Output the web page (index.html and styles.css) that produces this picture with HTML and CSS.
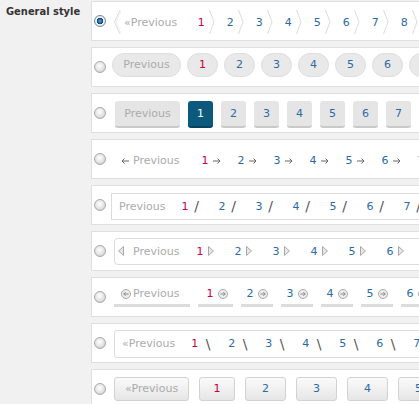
FILE: index.html
```html
<!DOCTYPE html>
<html lang="en">
<head>
    <meta charset="UTF-8">
    <meta name="viewport" content="width=device-width, initial-scale=1.0">
    <title>Pagination settings</title>
    <link rel="stylesheet" href="styles.css">
</head>
<body>

    <div class="form-row">
        <div class="field-label">General style</div>

        <div class="choices">

            <!-- 1: chevrons -->
            <label class="choice">
                <input type="radio" name="style" checked>
                <div class="nav nav-chevron">
                    <svg class="chev" width="8" height="24" viewBox="0 0 8 24"><polyline points="7,0 1.5,12 7,24" fill="none" stroke="#dcdcdc"/><polyline points="8,1 3,12 8,23" fill="none" stroke="#f0f0f0"/></svg>
                    <span class="prev">«Previous</span>
                    <span class="item"><span class="num current">1</span><svg class="chev" width="6" height="24" viewBox="0 0 6 24"><polyline points="0.5,0 5,12 0.5,24" fill="none" stroke="#dcdcdc"/></svg></span>
                    <span class="item"><span class="num">2</span><svg class="chev" width="6" height="24" viewBox="0 0 6 24"><polyline points="0.5,0 5,12 0.5,24" fill="none" stroke="#dcdcdc"/></svg></span>
                    <span class="item"><span class="num">3</span><svg class="chev" width="6" height="24" viewBox="0 0 6 24"><polyline points="0.5,0 5,12 0.5,24" fill="none" stroke="#dcdcdc"/></svg></span>
                    <span class="item"><span class="num">4</span><svg class="chev" width="6" height="24" viewBox="0 0 6 24"><polyline points="0.5,0 5,12 0.5,24" fill="none" stroke="#dcdcdc"/></svg></span>
                    <span class="item"><span class="num">5</span><svg class="chev" width="6" height="24" viewBox="0 0 6 24"><polyline points="0.5,0 5,12 0.5,24" fill="none" stroke="#dcdcdc"/></svg></span>
                    <span class="item"><span class="num">6</span><svg class="chev" width="6" height="24" viewBox="0 0 6 24"><polyline points="0.5,0 5,12 0.5,24" fill="none" stroke="#dcdcdc"/></svg></span>
                    <span class="item"><span class="num">7</span><svg class="chev" width="6" height="24" viewBox="0 0 6 24"><polyline points="0.5,0 5,12 0.5,24" fill="none" stroke="#dcdcdc"/></svg></span>
                    <span class="item"><span class="num">8</span><svg class="chev" width="6" height="24" viewBox="0 0 6 24"><polyline points="0.5,0 5,12 0.5,24" fill="none" stroke="#dcdcdc"/></svg></span>
                </div>
            </label>

            <!-- 2: pills -->
            <label class="choice">
                <input type="radio" name="style">
                <div class="nav nav-pill">
                    <span class="prev">Previous</span>
                    <span class="item current">1</span>
                    <span class="item">2</span>
                    <span class="item">3</span>
                    <span class="item">4</span>
                    <span class="item">5</span>
                    <span class="item">6</span>
                    <span class="item">7</span>
                </div>
            </label>

            <!-- 3: square buttons -->
            <label class="choice">
                <input type="radio" name="style">
                <div class="nav nav-square">
                    <span class="prev">Previous</span>
                    <span class="item current">1</span>
                    <span class="item">2</span>
                    <span class="item">3</span>
                    <span class="item">4</span>
                    <span class="item">5</span>
                    <span class="item">6</span>
                    <span class="item">7</span>
                </div>
            </label>

            <!-- 4: arrows -->
            <label class="choice">
                <input type="radio" name="style">
                <div class="nav nav-arrow">
                    <span class="prev"><svg width="8" height="6" viewBox="0 0 8 6"><path d="M8 3H1M3.5 0.5L1 3L3.5 5.5" fill="none" stroke="#666"/></svg>Previous</span>
                    <span class="item"><span class="num current">1</span><svg width="8" height="6" viewBox="0 0 8 6"><path d="M0 3H7M4.5 0.5L7 3L4.5 5.5" fill="none" stroke="#666"/></svg></span>
                    <span class="item"><span class="num">2</span><svg width="8" height="6" viewBox="0 0 8 6"><path d="M0 3H7M4.5 0.5L7 3L4.5 5.5" fill="none" stroke="#666"/></svg></span>
                    <span class="item"><span class="num">3</span><svg width="8" height="6" viewBox="0 0 8 6"><path d="M0 3H7M4.5 0.5L7 3L4.5 5.5" fill="none" stroke="#666"/></svg></span>
                    <span class="item"><span class="num">4</span><svg width="8" height="6" viewBox="0 0 8 6"><path d="M0 3H7M4.5 0.5L7 3L4.5 5.5" fill="none" stroke="#666"/></svg></span>
                    <span class="item"><span class="num">5</span><svg width="8" height="6" viewBox="0 0 8 6"><path d="M0 3H7M4.5 0.5L7 3L4.5 5.5" fill="none" stroke="#666"/></svg></span>
                    <span class="item"><span class="num">6</span><svg width="8" height="6" viewBox="0 0 8 6"><path d="M0 3H7M4.5 0.5L7 3L4.5 5.5" fill="none" stroke="#666"/></svg></span>
                    <span class="item"><span class="num">7</span><svg width="8" height="6" viewBox="0 0 8 6"><path d="M0 3H7M4.5 0.5L7 3L4.5 5.5" fill="none" stroke="#666"/></svg></span>
                </div>
            </label>

            <!-- 5: slashes -->
            <label class="choice">
                <input type="radio" name="style">
                <div class="nav nav-framed nav-slash">
                    <span class="prev">Previous</span>
                    <span class="item"><span class="num current">1</span><span class="sep">/</span></span>
                    <span class="item"><span class="num">2</span><span class="sep">/</span></span>
                    <span class="item"><span class="num">3</span><span class="sep">/</span></span>
                    <span class="item"><span class="num">4</span><span class="sep">/</span></span>
                    <span class="item"><span class="num">5</span><span class="sep">/</span></span>
                    <span class="item"><span class="num">6</span><span class="sep">/</span></span>
                    <span class="item"><span class="num">7</span><span class="sep">/</span></span>
                </div>
            </label>

            <!-- 6: triangles -->
            <label class="choice">
                <input type="radio" name="style">
                <div class="nav nav-framed nav-tri">
                    <svg class="tri-left" width="6" height="10" viewBox="0 0 6 10"><polygon points="5.5,0.5 0.5,5 5.5,9.5" fill="#e6e6e6" stroke="#aaa"/></svg>
                    <span class="prev">Previous</span>
                    <span class="item"><span class="num current">1</span><svg width="6" height="10" viewBox="0 0 6 10"><polygon points="0.5,0.5 5.5,5 0.5,9.5" fill="#e6e6e6" stroke="#aaa"/></svg></span>
                    <span class="item"><span class="num">2</span><svg width="6" height="10" viewBox="0 0 6 10"><polygon points="0.5,0.5 5.5,5 0.5,9.5" fill="#e6e6e6" stroke="#aaa"/></svg></span>
                    <span class="item"><span class="num">3</span><svg width="6" height="10" viewBox="0 0 6 10"><polygon points="0.5,0.5 5.5,5 0.5,9.5" fill="#e6e6e6" stroke="#aaa"/></svg></span>
                    <span class="item"><span class="num">4</span><svg width="6" height="10" viewBox="0 0 6 10"><polygon points="0.5,0.5 5.5,5 0.5,9.5" fill="#e6e6e6" stroke="#aaa"/></svg></span>
                    <span class="item"><span class="num">5</span><svg width="6" height="10" viewBox="0 0 6 10"><polygon points="0.5,0.5 5.5,5 0.5,9.5" fill="#e6e6e6" stroke="#aaa"/></svg></span>
                    <span class="item"><span class="num">6</span><svg width="6" height="10" viewBox="0 0 6 10"><polygon points="0.5,0.5 5.5,5 0.5,9.5" fill="#e6e6e6" stroke="#aaa"/></svg></span>
                </div>
            </label>

            <!-- 7: underlined with circle arrows -->
            <label class="choice">
                <input type="radio" name="style">
                <div class="nav nav-under">
                    <span class="prev"><svg width="10" height="10" viewBox="0 0 10 10"><circle cx="5" cy="5" r="4.5" fill="#ececec" stroke="#aaa"/><path d="M7.5 5H2.8M4.6 3.2L2.8 5L4.6 6.8" fill="none" stroke="#888"/></svg>Previous</span>
                    <span class="item first"><span class="num current">1</span><svg width="10" height="10" viewBox="0 0 10 10"><circle cx="5" cy="5" r="4.5" fill="#ececec" stroke="#aaa"/><path d="M2.5 5H7.2M5.4 3.2L7.2 5L5.4 6.8" fill="none" stroke="#888"/></svg></span>
                    <span class="item"><span class="num">2</span><svg width="10" height="10" viewBox="0 0 10 10"><circle cx="5" cy="5" r="4.5" fill="#ececec" stroke="#aaa"/><path d="M2.5 5H7.2M5.4 3.2L7.2 5L5.4 6.8" fill="none" stroke="#888"/></svg></span>
                    <span class="item"><span class="num">3</span><svg width="10" height="10" viewBox="0 0 10 10"><circle cx="5" cy="5" r="4.5" fill="#ececec" stroke="#aaa"/><path d="M2.5 5H7.2M5.4 3.2L7.2 5L5.4 6.8" fill="none" stroke="#888"/></svg></span>
                    <span class="item"><span class="num">4</span><svg width="10" height="10" viewBox="0 0 10 10"><circle cx="5" cy="5" r="4.5" fill="#ececec" stroke="#aaa"/><path d="M2.5 5H7.2M5.4 3.2L7.2 5L5.4 6.8" fill="none" stroke="#888"/></svg></span>
                    <span class="item"><span class="num">5</span><svg width="10" height="10" viewBox="0 0 10 10"><circle cx="5" cy="5" r="4.5" fill="#ececec" stroke="#aaa"/><path d="M2.5 5H7.2M5.4 3.2L7.2 5L5.4 6.8" fill="none" stroke="#888"/></svg></span>
                    <span class="item"><span class="num">6</span><svg width="10" height="10" viewBox="0 0 10 10"><circle cx="5" cy="5" r="4.5" fill="#ececec" stroke="#aaa"/><path d="M2.5 5H7.2M5.4 3.2L7.2 5L5.4 6.8" fill="none" stroke="#888"/></svg></span>
                </div>
            </label>

            <!-- 8: backslashes -->
            <label class="choice">
                <input type="radio" name="style">
                <div class="nav nav-framed nav-back">
                    <span class="prev">«Previous</span>
                    <span class="item"><span class="num current">1</span><span class="sep">\</span></span>
                    <span class="item"><span class="num">2</span><span class="sep">\</span></span>
                    <span class="item"><span class="num">3</span><span class="sep">\</span></span>
                    <span class="item"><span class="num">4</span><span class="sep">\</span></span>
                    <span class="item"><span class="num">5</span><span class="sep">\</span></span>
                    <span class="item"><span class="num">6</span><span class="sep">\</span></span>
                    <span class="item"><span class="num">7</span><span class="sep">\</span></span>
                </div>
            </label>

            <!-- 9: gradient buttons -->
            <label class="choice">
                <input type="radio" name="style">
                <div class="nav nav-button">
                    <span class="prev">«Previous</span>
                    <span class="item current">1</span>
                    <span class="item">2</span>
                    <span class="item">3</span>
                    <span class="item">4</span>
                    <span class="item">5</span>
                </div>
            </label>

        </div>
    </div>

</body>
</html>
```

FILE: styles.css
```css
* { box-sizing: border-box; }
body { margin: 0; background: #f1f1f1; font-family: "DejaVu Sans", Verdana, sans-serif; font-size: 11px; color: #333; overflow: hidden; }
.form-row { display: flex; width: 600px; }
.field-label { width: 91px; flex: none; padding: 5px 0 0 6px; font-family: "DejaVu Sans Condensed", "DejaVu Sans", sans-serif; font-weight: bold; font-size: 11px; color: #333; }
.choices { width: 500px; flex: none; padding-top: 1px; display: flex; flex-direction: column; gap: 6px; }
.choice { height: 40px; background: #fff; border: 1px solid #dfdfdf; border-right: none; display: flex; align-items: center; padding-left: 2px; white-space: nowrap; }

.choice input { appearance: none; -webkit-appearance: none; flex: none; width: 12px; height: 12px; margin: 0; border-radius: 50%; border: 1px solid #a9a9a9; background: radial-gradient(circle at 45% 40%, #fff 0, #e8e8e8 45%, #c4c4c4 100%); }
.choice input:checked { border-color: #7a8a99; background: radial-gradient(circle, #5fa8e0 0, #1d64a6 2px, #0c3f70 3px, #fff 3.6px, #eaeaea 4.6px, #c4c4c4 100%); }

.nav { display: flex; align-items: center; flex: none; }
.num { color: #2b6aa8; }
.current { color: #c8003c; }
.prev { color: #ababab; }

/* 1 */
.nav-chevron { margin-left: 7px; margin-top: 1px; }
.nav-chevron .prev { margin-left: 3px; margin-right: 16px; padding-top: 1px; }
.nav-chevron .item { display: flex; align-items: center; width: 29px; }
.nav-chevron .num { width: 16px; text-align: center; padding-top: 1px; }
.nav-chevron .item .chev { margin-right: 7px; }

/* 2 */
.nav-pill { margin-left: 6px; margin-bottom: 4px; }
.nav-pill .prev, .nav-pill .item { height: 24px; line-height: 22px; text-align: center; background: #e9e9e9; border: 1px solid #dedede; border-radius: 12px; }
.nav-pill .prev { width: 69px; }
.nav-pill .item { width: 31px; margin-left: 6px; color: #2b6aa8; }
.nav-pill .item.current { color: #c8003c; }

/* 3 */
.nav-square { margin-left: 9px; margin-top: 3px; }
.nav-square .prev, .nav-square .item { height: 27px; line-height: 26px; text-align: center; background: #e5e5e5; border-bottom: 2px solid #c9c9c9; border-radius: 3px; }
.nav-square .prev { width: 65px; }
.nav-square .item { width: 25px; margin-left: 8px; color: #2b6aa8; }
.nav-square .item.current { background: #0b5a7e; border-bottom-color: #07435f; color: #fff; }

/* 4 */
.nav-arrow { margin-left: 15px; margin-top: 3px; }
.nav-arrow .prev { display: flex; align-items: center; gap: 4px; margin-right: 22px; }
.nav-arrow .item { display: flex; align-items: center; width: 36px; }
.nav-arrow .item svg { margin-left: 4px; }

/* framed rows: 5, 6, 8 */
.nav-framed { height: 27px; width: 400px; border: 1px solid #dcdcdc; }
.nav-framed .sep { font-size: 14px; color: #555; width: 6px; text-align: center; }

/* 5 */
.nav-slash { margin-left: 5px; padding-left: 7px; margin-top: 2px; }
.nav-slash .prev { margin-right: 16px; }
.nav-slash .item { display: flex; align-items: center; width: 37px; }
.nav-slash .sep { margin-left: 5px; }

/* 6 */
.nav-tri { margin-left: 8px; padding-left: 3px; border-radius: 4px; }
.nav-tri .prev { margin-left: 9px; margin-right: 17px; }
.nav-tri .item { display: flex; align-items: center; width: 38px; }
.nav-tri .item svg { margin-left: 4px; }

/* 7 */
.nav-under { margin-left: 8px; align-items: flex-start; }
.nav-under .prev, .nav-under .item { display: flex; align-items: center; height: 20px; padding-bottom: 4px; border-bottom: 3px solid #dcdcdc; }
.nav-under .prev { width: 76px; padding-left: 7px; gap: 2px; }
.nav-under .item { width: 32px; margin-left: 8px; justify-content: center; gap: 4px; }
.nav-under .item.first { width: 35px; padding-left: 3px; }

/* 8 */
.nav-back { margin-left: 8px; padding-left: 7px; height: 28px; border-radius: 3px; margin-top: 1px; }
.nav-back .prev { margin-right: 16px; }
.nav-back .item { display: flex; align-items: center; width: 37px; }
.nav-back .sep { margin-left: 7px; }

/* 9 */
.nav-button { margin-left: 8px; }
.nav-button .prev, .nav-button .item { height: 24px; line-height: 22px; text-align: center; background: linear-gradient(#fafafa, #e6e6e6); border: 1px solid #d2d2d2; border-radius: 3px; }
.nav-button .prev { width: 75px; }
.nav-button .item { width: 41px; margin-left: 10px; color: #2b6aa8; }
.nav-button .item.current { width: 36px; color: #c8003c; }
```
